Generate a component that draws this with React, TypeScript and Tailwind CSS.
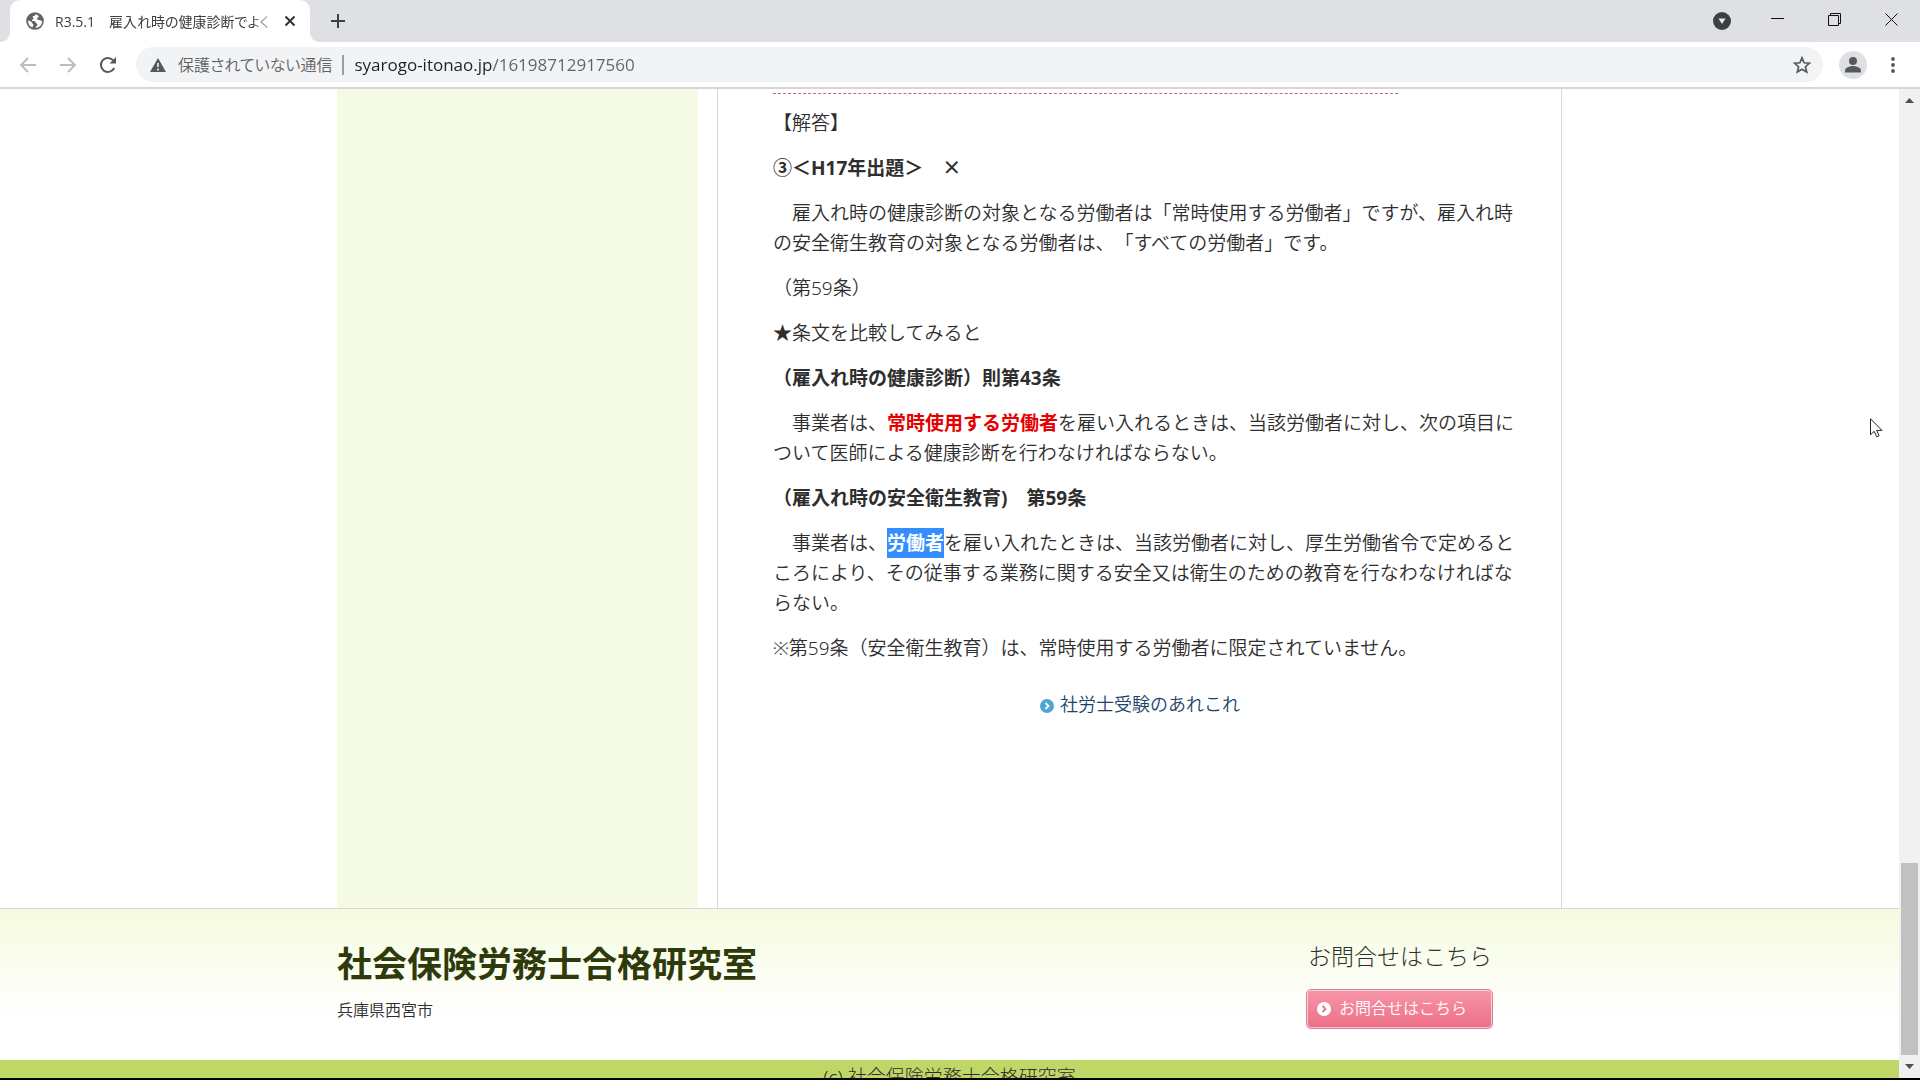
import type { ReactNode } from "react";

const UI_FONT = "font-['Open_Sans','Noto_Sans_CJK_JP',sans-serif]";
const PAGE_FONT = "font-['Noto_Sans','Noto_Sans_CJK_JP',sans-serif]";

export default function App() {
  return (
    <div className="flex h-screen flex-col overflow-hidden border-b-2 border-black bg-white">
      <TabStrip />
      <Toolbar />
      <div className="relative flex min-h-0 flex-1">
        <div className={`min-w-0 flex-1 overflow-hidden text-[#2e2e2e] ${PAGE_FONT}`}>
          <PageBody />
          <PageFooter />
        </div>
        <Scrollbar />
        <Pointer />
      </div>
    </div>
  );
}

function TabStrip() {
  return (
    <header className={`flex h-[42px] shrink-0 bg-[#dee0e4] ${UI_FONT}`}>
      <div className="flex w-[320px] items-end">
        <TabCurve />
        <div className="flex h-full min-w-0 flex-1 items-center rounded-t-[10px] bg-white pr-2 pl-4">
          <GlobeIcon />
          <span
            className="ml-[11px] min-w-0 flex-1 overflow-hidden whitespace-nowrap text-[14px] text-[#3c4043]
                       [font-feature-settings:'palt'] [mask-image:linear-gradient(90deg,#000_88%,transparent)]"
          >
            R3.5.1　雇入れ時の健康診断でよく
          </span>
          <button type="button" aria-label="タブを閉じる" className="flex size-6 items-center justify-center">
            <svg viewBox="0 0 12 12" className="size-3" stroke="#303236" strokeWidth="2" fill="none">
              <path d="M1.5 1.5l9 9M10.5 1.5l-9 9" />
            </svg>
          </button>
        </div>
        <TabCurve flip />
      </div>
      <button type="button" aria-label="新しいタブ" className="ml-[6px] flex w-6 items-center justify-center">
        <svg viewBox="0 0 16 16" className="size-4" stroke="#3c4043" strokeWidth="2" fill="none">
          <path d="M8 1v14M1 8h14" />
        </svg>
      </button>
      <div className="ml-auto flex">
        <button type="button" aria-label="タブを検索" className="mr-[7px] flex w-10 items-center justify-center">
          <svg viewBox="0 0 18 18" className="size-[18px]">
            <circle cx="9" cy="9" r="9" fill="#3c4043" />
            <path d="M5.5 6.5h7L9 12z" fill="#e8eaed" />
          </svg>
        </button>
        <WindowButton label="最小化">
          <path d="M1 6.5h13" />
        </WindowButton>
        <WindowButton label="元に戻す">
          <path d="M1.5 3.5h10v10h-10zM3.5 3.5v-2h10v10h-2" />
        </WindowButton>
        <WindowButton label="閉じる">
          <path d="M1.5 1.5l12 12M13.5 1.5l-12 12" />
        </WindowButton>
      </div>
    </header>
  );
}

function TabCurve({ flip = false }: { flip?: boolean }) {
  return (
    <svg viewBox="0 0 10 10" className={`size-[10px] shrink-0 ${flip ? "-scale-x-100" : ""}`}>
      <path d="M10 0v10H0C6 10 10 6 10 0z" fill="#fff" />
    </svg>
  );
}

function WindowButton({ label, children }: { label: string; children: ReactNode }) {
  return (
    <button type="button" aria-label={label} className="flex w-[57px] items-center justify-center pb-1">
      <svg viewBox="0 0 15 15" className="size-[15px]" stroke="#111" strokeWidth="1" fill="none">
        {children}
      </svg>
    </button>
  );
}

function GlobeIcon() {
  return (
    <svg viewBox="0 0 18 18" className="size-[18px] shrink-0">
      <circle cx="9" cy="9" r="8.8" fill="#5f6368" />
      <path
        d="M9.6 2c-.2 1.6-1 1.9-2.2 2.1-.9.2-.8 1.3-.2 1.8.8.6.4 1.5-.6 1.7-1 .2-1 1.3 0 1.5 1.5.2 2.9.2 3.2 1.4.2 1 1.4.8 1.6 1.7.2.9-.7 1.5-1.3 2.2-.4.5-.5 1-.5 1.6 3.7-.3 6.4-3 6.6-6.7-1.2-.1-1.6-1.3-2.8-1.3-1.3 0-2.3-.3-2.3-1.5 0-1.1 1.5-1 1.6-2.1.1-.9-1.4-1.5-3.1-2.4z"
        fill="#fff"
      />
      <path d="M2 8.8c1.7 0 3.4.6 3.8 1.7.4 1.1 1.7 1.3 1.6 2.4-.1.9-.9 1.6-.9 2.7C3.7 14.6 2 12 2 8.8z" fill="#fff" />
    </svg>
  );
}

function Toolbar() {
  return (
    <div className={`flex h-[47px] shrink-0 items-center border-b-2 border-[#d5d6d8] pr-[13px] pl-2 ${UI_FONT}`}>
      <NavButton label="戻る" color="#bcbec1">
        <path d="M17 9H2M9 2L2 9l7 7" />
      </NavButton>
      <NavButton label="進む" color="#bcbec1">
        <path d="M1 9h15M9 2l7 7-7 7" />
      </NavButton>
      <NavButton label="再読み込み" color="#55585d">
        <path d="M15.2 12A7 7 0 1 1 14 4.1l2 2" />
        <path d="M17 1v6.5h-6.5z" fill="#55585d" stroke="none" />
      </NavButton>
      <div className="ml-2 flex h-[35px] flex-1 items-center rounded-full bg-[#f1f3f4] pr-3 pl-[14px]">
        <svg viewBox="0 0 16 14" className="h-[14px] w-4 shrink-0">
          <path d="M8 0l8 14H0z" fill="#55585d" />
          <path d="M8 5v4M8 10.5v2" stroke="#f1f3f4" strokeWidth="1.6" />
        </svg>
        <span className="ml-3 text-[16px] font-[350] text-[#5f6368] [font-feature-settings:'palt']">
          保護されていない通信
        </span>
        <span className="mx-[10px] h-5 w-[2px] bg-[#9a9ea3]" />
        <label htmlFor="url" className="sr-only">
          アドレス
        </label>
        <input
          id="url"
          type="text"
          defaultValue="syarogo-itonao.jp/16198712917560"
          className="min-w-0 flex-1 bg-[linear-gradient(90deg,#202124_138px,#5f6368_138px)] bg-clip-text
                     text-[17px] text-transparent outline-none"
        />
        <button type="button" aria-label="ブックマーク">
          <svg viewBox="0 0 18 18" className="size-[18px]" fill="none" stroke="#55585d" strokeWidth="1.7">
            <path d="M9 1.8l2.1 5 5.4.4-4.1 3.5 1.3 5.3L9 13.2 4.3 16l1.3-5.3L1.5 7.2l5.4-.4z" />
          </svg>
        </button>
      </div>
      <button type="button" aria-label="プロフィール" className="ml-4 size-7 rounded-full bg-[#dee0e4]">
        <svg viewBox="0 0 28 28" className="size-7" fill="#55585d">
          <circle cx="14" cy="10" r="4" />
          <path d="M6 21.5v-2c0-3 5-4.5 8-4.5s8 1.5 8 4.5v2z" />
        </svg>
      </button>
      <button type="button" aria-label="メニュー" className="ml-3 flex w-7 justify-center">
        <svg viewBox="0 0 4 18" className="h-[18px] w-1" fill="#55585d">
          <circle cx="2" cy="3" r="1.9" />
          <circle cx="2" cy="9" r="1.9" />
          <circle cx="2" cy="15" r="1.9" />
        </svg>
      </button>
    </div>
  );
}

function NavButton({ label, color, children }: { label: string; color: string; children: ReactNode }) {
  return (
    <button type="button" aria-label={label} className="flex w-10 items-center justify-center">
      <svg viewBox="0 0 18 18" className="size-[18px]" fill="none" stroke={color} strokeWidth="2">
        {children}
      </svg>
    </button>
  );
}

function PageBody() {
  return (
    <div className="mx-auto flex w-[1225px]">
      <aside className="w-[361px] bg-[#f5fae5]" />
      <main className="ml-[19px] flex-1 border-x border-[#d8d8d8] pr-[46px] pl-[55px]">
        <hr className="mt-1 w-[625px] border-t border-dashed border-[#b8688c]" />
        <article className="mt-[14px] space-y-[15px] text-[19px] leading-[30px] font-[350] [text-spacing-trim:space-all]">
          <p>【解答】</p>
          <p className="font-bold">
            ③＜H17年出題＞　<span className="font-['Noto_Sans_CJK_JP',sans-serif] leading-none">×</span>
          </p>
          <p className="indent-[1em]">
            雇入れ時の健康診断の対象となる労働者は「常時使用する労働者」ですが、雇入れ時の安全衛生教育の対象となる労働者は、「すべての労働者」です。
          </p>
          <p>（第59条）</p>
          <p>★条文を比較してみると</p>
          <p className="font-bold">（雇入れ時の健康診断）則第43条</p>
          <p className="indent-[1em]">
            事業者は、<strong className="font-bold text-[#e60000]">常時使用する労働者</strong>
            を雇い入れるときは、当該労働者に対し、次の項目について医師による健康診断を行わなければならない。
          </p>
          <p className="font-bold">（雇入れ時の安全衛生教育)　第59条</p>
          <p className="indent-[1em]">
            事業者は、<strong className="bg-[#338fff] py-[2px] font-bold text-white">労働者</strong>
            を雇い入れたときは、当該労働者に対し、厚生労働省令で定めるところにより、その従事する業務に関する安全又は衛生のための教育を行なわなければならない。
          </p>
          <p>※第59条（安全衛生教育）は、常時使用する労働者に限定されていません。</p>
        </article>
        <div className="flex justify-center pt-[26px] pr-2 pb-[189px]">
          <a href="#arekore" className="flex items-center gap-[6px] text-[18px] leading-[30px] font-[350] text-[#1b4468]">
            <svg viewBox="0 0 14 14" className="mt-1 size-[14px]">
              <circle cx="7" cy="7" r="7" fill="#4da6d3" />
              <path d="M5.5 4l3 3-3 3" fill="none" stroke="#fff" strokeWidth="1.8" />
            </svg>
            社労士受験のあれこれ
          </a>
        </div>
      </main>
    </div>
  );
}

function PageFooter() {
  return (
    <footer>
      <div className="border-t border-[#d5d5d5] bg-linear-to-b from-[#f5fbe0] to-white to-75%">
        <div className="mx-auto flex h-[151px] w-[1225px] justify-between">
          <div className="pt-[31px]">
            <h2 className="text-[35px] leading-[48px] font-bold text-[#2f3a0b]">社会保険労務士合格研究室</h2>
            <p className="mt-[10px] text-[16px] leading-6 font-[350]">兵庫県西宮市</p>
          </div>
          <div className="mr-[69px] pt-[31px]">
            <h3 className="ml-[2px] text-[23px] leading-8 font-light">お問合せはこちら</h3>
            <a
              href="#contact"
              className="mt-[17px] flex h-10 w-[187px] items-center gap-2 rounded-[5px] border border-[#dc8097]
                         bg-linear-to-b from-[#f795a8] to-[#ec6f87] pb-[2px] pl-[10px] text-[16px] font-[350]
                         text-white ring-1 ring-white/60 ring-inset"
            >
              <svg viewBox="0 0 14 14" className="mt-[2px] size-[14px]">
                <circle cx="7" cy="7" r="7" fill="#fff" />
                <path d="M5.5 4l3 3-3 3" fill="none" stroke="#e5738a" strokeWidth="1.8" />
              </svg>
              お問合せはこちら
            </a>
          </div>
        </div>
      </div>
      <div className="bg-[#bfd766] pt-[2px] text-center text-[19px] leading-[30px] font-light">
        (c) 社会保険労務士合格研究室
      </div>
    </footer>
  );
}

function Scrollbar() {
  return (
    <div className="flex w-[21px] shrink-0 flex-col items-center bg-[#f1f1f1]">
      <svg viewBox="0 0 9 5" className="mt-[9px] h-[5px] w-[9px]" fill="#505050">
        <path d="M4.5 0L9 5H0z" />
      </svg>
      <div className="mt-auto h-[192px] w-[17px] bg-[#c1c1c1]" />
      <svg viewBox="0 0 9 5" className="my-[9px] h-[5px] w-[9px]" fill="#505050">
        <path d="M4.5 5L9 0H0z" />
      </svg>
    </div>
  );
}

function Pointer() {
  return (
    <svg viewBox="0 0 13 20" className="absolute top-[329px] right-[37px] h-5 w-[13px]">
      <path d="M.5.8v16l3.7-3.5 2.5 5.5 2.4-1.1-2.4-5.3h5.3z" fill="#fff" stroke="#222" />
    </svg>
  );
}
